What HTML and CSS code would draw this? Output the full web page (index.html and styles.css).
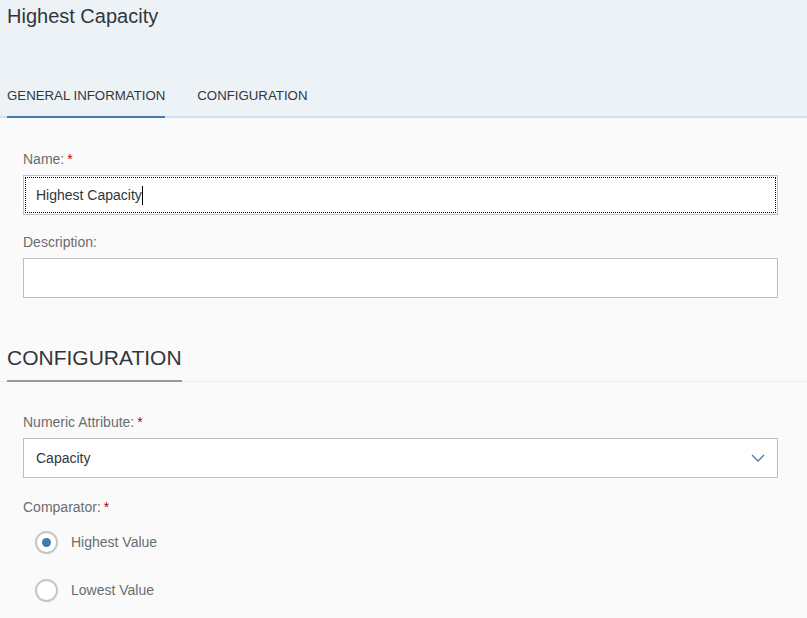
FILE: index.html
```html
<!DOCTYPE html>
<html lang="en">
<head>
<meta charset="utf-8">
<title>Highest Capacity</title>
<link rel="stylesheet" href="styles.css">
</head>
<body>
<header class="page-header">
  <h1 class="page-title">Highest Capacity</h1>
  <nav class="tabs">
    <span class="tab tab-active">GENERAL INFORMATION</span>
    <span class="tab">CONFIGURATION</span>
  </nav>
</header>
<main class="content">
  <section class="form-block general">
    <div class="field">
      <label class="field-label">Name:<span class="req">*</span></label>
      <div class="input input-focus"><span class="input-text caret">Highest Capacity</span></div>
    </div>
    <div class="field">
      <label class="field-label">Description:</label>
      <div class="input"></div>
    </div>
  </section>
  <div class="section-title"><h2 class="section-heading">CONFIGURATION</h2></div>
  <section class="form-block config">
    <div class="field">
      <label class="field-label">Numeric Attribute:<span class="req">*</span></label>
      <div class="input select"><span class="input-text">Capacity</span>
        <svg class="chevron" width="14" height="8" viewBox="0 0 14 8"><polyline points="1,1 7,7 13,1" fill="none" stroke="#427cac" stroke-width="1.3"/></svg>
      </div>
    </div>
    <div class="field">
      <label class="field-label">Comparator:<span class="req">*</span></label>
      <div class="radio-group">
        <div class="radio-row"><span class="radio radio-on"></span><span class="radio-text">Highest Value</span></div>
        <div class="radio-row"><span class="radio"></span><span class="radio-text">Lowest Value</span></div>
      </div>
    </div>
  </section>
</main>
</body>
</html>
```
FILE: styles.css
```css
* { box-sizing: border-box; }
html, body { margin: 0; padding: 0; }
body {
  font-family: "Liberation Sans", Arial, sans-serif;
  background: #fafafa;
  color: #32363a;
  width: 807px;
  height: 618px;
  overflow: hidden;
}
.page-header {
  background: #edf2f7;
  border-bottom: 2px solid #d1e1f0;
  padding: 0 7px;
  height: 118px;
  display: flex;
  flex-direction: column;
}
.page-title {
  margin: 0;
  padding-top: 5px;
  font-size: 20px;
  line-height: 22px;
  font-weight: normal;
  color: #32363a;
}
.tabs {
  margin-top: auto;
  display: flex;
  gap: 32px;
  margin-bottom: -2px;
}
.tab {
  font-size: 13.25px;
  line-height: 16px;
  padding: 19px 0 12px;
  color: #32363a;
  border-bottom: 2px solid transparent;
}
.tab-active {
  border-bottom-color: #427cac;
}
.content { display: flex; flex-direction: column; }
.form-block {
  padding: 0 29px 0 23px;
  display: flex;
  flex-direction: column;
}
.general { padding-top: 32px; gap: 18px; }
.config { padding-top: 31px; gap: 20px; }
.field { display: flex; flex-direction: column; gap: 7px; }
.field-label {
  font-size: 14px;
  line-height: 18px;
  color: #6a6d70;
}
.req { color: #bb0000; margin-left: 3px; }
.input {
  height: 40px;
  background: #fff;
  border: 1px solid #bfbfbf;
  padding: 0 12px;
  display: flex;
  align-items: center;
}
.input-focus {
  outline: 1px dotted #000;
  outline-offset: -3px;
}
.input-text {
  font-size: 14px;
  color: #32363a;
}
.caret { border-right: 1px solid #000; line-height: 19px; }
.select { justify-content: space-between; padding-right: 12px; }
.chevron { display: block; }
.section-title {
  margin-top: 46px;
  padding: 0 7px;
  border-bottom: 1px solid #ededed;
}
.section-heading {
  display: inline-block;
  margin: 0 0 -1px;
  font-size: 21px;
  line-height: 28px;
  font-weight: normal;
  color: #32363a;
  padding-bottom: 8px;
  border-bottom: 2px solid #999;
}
.radio-group { display: flex; flex-direction: column; padding-left: 12px; margin-top: -5px; }
.radio-row {
  height: 48px;
  display: flex;
  align-items: center;
  gap: 13px;
}
.radio {
  width: 23px;
  height: 23px;
  border-radius: 50%;
  border: 2px solid #c6c6c6;
  background: #fff;
  display: flex;
  align-items: center;
  justify-content: center;
}
.radio-on::after {
  content: "";
  width: 9px;
  height: 9px;
  border-radius: 50%;
  background: #427cac;
}
.radio-text { font-size: 14px; color: #6a6d70; }
```
